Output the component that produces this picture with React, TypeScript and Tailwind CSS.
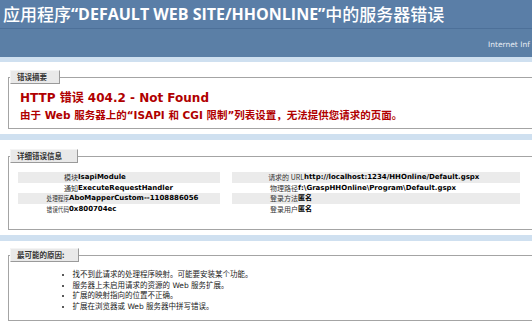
import React from "react";

const cjk = '"Noto Sans CJK SC", sans-serif';
const vera = '"DejaVu Sans", "Noto Sans CJK SC", sans-serif';

function Legend({ children, w }: { children: React.ReactNode; w: string }) {
  return (
    <legend
      className={`ml-[1px] h-[14px] ${w} flex items-center pl-[6px] bg-[#e9e9e9] border border-t-[#f4f4f4] border-l-[#f4f4f4] border-r-[#9a9a9a] border-b-[#9a9a9a] text-[7.5px] font-bold text-[#333]`}
      style={{ fontFamily: cjk }}
    >
      {children}
    </legend>
  );
}

export default function App() {
  const leftRows: { l: string; v: string; narrow?: boolean; gray: boolean }[] = [
    { l: "模块", v: "IsapiModule", gray: true },
    { l: "通知", v: "ExecuteRequestHandler", gray: false },
    { l: "处理程序", v: "AboMapperCustom--1108886056", narrow: true, gray: true },
    { l: "错误代码", v: "0x800704ec", narrow: true, gray: false },
  ];
  const rightRows: { l: string; v: string; gray: boolean; wide?: boolean }[] = [
    { l: "请求的 URL", v: "http://localhost:1234/HHOnline/Default.gspx", gray: true, wide: true },
    { l: "物理路径", v: "f:\\GraspHHOnline\\Program\\Default.gspx", gray: false },
    { l: "登录方法", v: "匿名", gray: true },
    { l: "登录用户", v: "匿名", gray: false },
  ];
  return (
    <div className="w-[532px] h-[327px] overflow-hidden bg-white">
      {/* header */}
      <div className="h-[28px] bg-[#5a7ea7] flex items-center pl-[3px] text-white whitespace-nowrap">
        <span className="text-[17px] font-medium" style={{ fontFamily: cjk }}>应用程序</span>
        <span className="text-[16px] font-bold" style={{ fontFamily: '"Open Sans", sans-serif' }}>
          “DEFAULT WEB SITE/HHONLINE”
        </span>
        <span className="text-[17px] font-medium" style={{ fontFamily: cjk }}>中的服务器错误</span>
      </div>
      <div className="h-px bg-[#4d7099]" />
      <div className="h-[28px] bg-[#5b7fa6] flex items-center pl-[488px] pt-[3px] whitespace-nowrap overflow-hidden">
        <span className="text-[7.5px] text-[#e8eef5]" style={{ fontFamily: vera }}>
          Internet Inf
        </span>
      </div>
      <div className="h-[5px] bg-[#cfe0f0]" />

      {/* summary */}
      <div className="pt-[8px] pb-[5px] pl-[8px]">
        <fieldset className="w-[560px] border border-[#a4a4a4] pb-[6px]">
          <Legend w="w-[50px]">错误摘要</Legend>
          <div className="pl-[11px] pt-[7px]">
            <div className="text-[12px] font-bold leading-[14px] text-[#b00000] whitespace-nowrap" style={{ fontFamily: vera }}>
              HTTP 错误 404.2 - Not Found
            </div>
            <div className="mt-[4px] text-[10.5px] font-bold leading-[13px] text-[#b00000] whitespace-nowrap" style={{ fontFamily: vera }}>
              由于 Web 服务器上的“ISAPI 和 CGI 限制”列表设置，无法提供您请求的页面。
            </div>
          </div>
        </fieldset>
      </div>
      <div className="h-[6px] bg-[#cfe0f0]" />

      {/* details */}
      <div className="pt-[9px] pb-[5px] pl-[8px]">
        <fieldset className="w-[560px] border border-[#a4a4a4] pb-[15px]">
          <Legend w="w-[68px]">详细错误信息</Legend>
          <div className="mt-[9px] flex gap-[12px] pl-[9px]">
            <div className="w-[202px] flex flex-col">
              {leftRows.map((r) => (
                <div key={r.l} className={`h-[10.5px] flex items-center whitespace-nowrap ${r.gray ? "bg-[#ebebeb]" : ""}`}>
                  <span
                    className={`${r.narrow ? "w-[51px]" : "w-[60px]"} shrink-0 text-right text-[7px] text-[#333]`}
                    style={{ fontFamily: cjk }}
                  >
                    <span className={r.narrow ? "inline-block scale-x-[0.8] origin-right" : ""}>{r.l}</span>
                  </span>
                  <span className="text-[7px] font-bold text-black" style={{ fontFamily: vera }}>{r.v}</span>
                </div>
              ))}
            </div>
            <div className="w-[288px] flex flex-col">
              {rightRows.map((r) => (
                <div key={r.l} className={`h-[10.5px] flex items-center whitespace-nowrap ${r.gray ? "bg-[#ebebeb]" : ""}`}>
                  <span
                    className={`${r.wide ? "w-[72px]" : "w-[66px]"} shrink-0 text-right text-[7px] text-[#333]`}
                    style={{ fontFamily: cjk }}
                  >
                    {r.l}
                  </span>
                  <span className="text-[7px] font-bold text-black" style={{ fontFamily: vera }}>{r.v}</span>
                </div>
              ))}
            </div>
          </div>
        </fieldset>
      </div>
      <div className="h-[6px] bg-[#cfe0f0]" />

      {/* causes */}
      <div className="pt-[7px] pl-[8px]">
        <fieldset className="w-[560px] border border-[#a4a4a4] pb-[8px]">
          <Legend w="w-[69px]">最可能的原因:</Legend>
          <ul className="mt-[8px] pl-[53px] list-disc list-inside text-[7.5px] leading-[10.5px] text-[#222]" style={{ fontFamily: vera }}>
            <li>找不到此请求的处理程序映射。可能要安装某个功能。</li>
            <li>服务器上未启用请求的资源的 Web 服务扩展。</li>
            <li>扩展的映射指向的位置不正确。</li>
            <li>扩展在浏览器或 Web 服务器中拼写错误。</li>
          </ul>
        </fieldset>
      </div>
    </div>
  );
}
